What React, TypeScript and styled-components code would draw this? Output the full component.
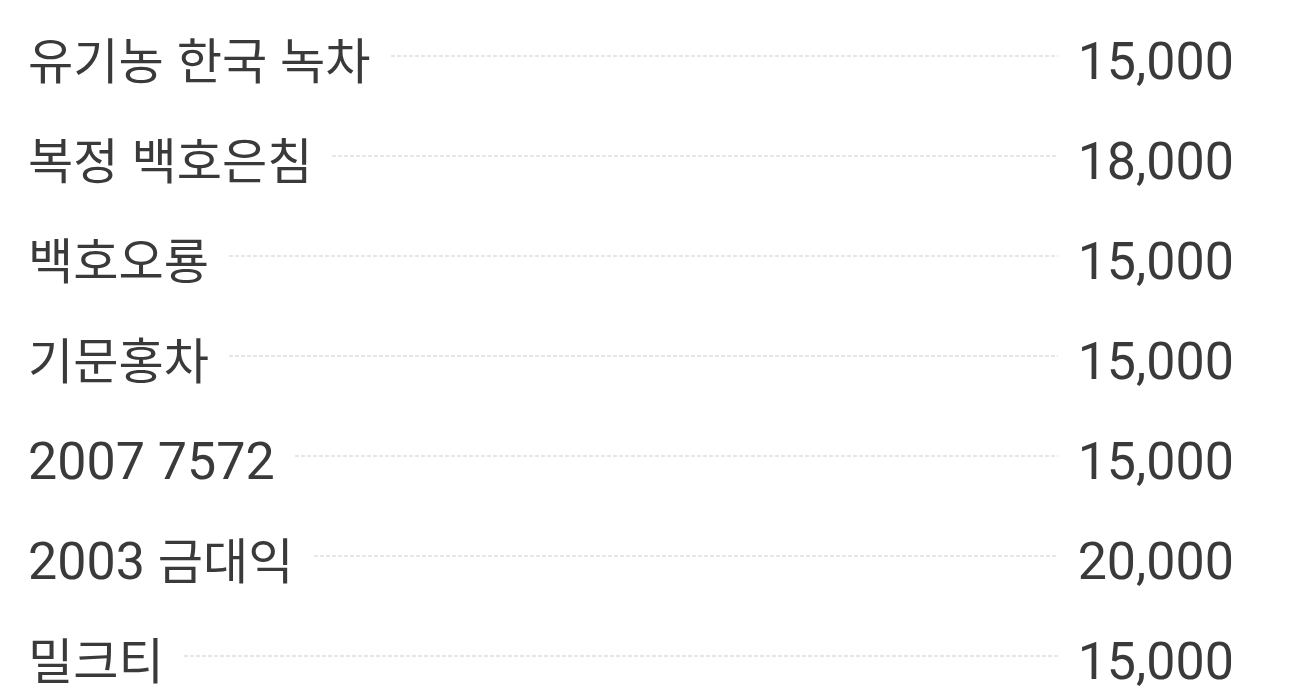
import React from "react";
import styled, { createGlobalStyle } from "styled-components";

const Global = createGlobalStyle`
  html, body { margin: 0; padding: 0; background: #fff; overflow: hidden; }
`;

const List = styled.ul`
  list-style: none;
  margin: 0;
  padding: 12px 58px 0 28px;
  font-family: Roboto, "Noto Sans CJK KR", sans-serif;
  color: #3a3a3a;
`;

const Row = styled.li`
  display: flex;
  align-items: center;
  height: 100px;
  font-size: 52px;
  line-height: 1;
`;

const Name = styled.span`
  white-space: nowrap;
`;

const Hangul = styled.span`
  font-size: 0.946em;
`;

const Leader = styled.span`
  flex: 1;
  height: 2px;
  margin: 0 20px;
  transform: translateY(-6px);
  background-image: linear-gradient(to right, #e6e6e6 0 4px, transparent 4px 6px);
  background-size: 6px 2px;
  background-repeat: repeat-x;
`;

const Price = styled.span`
  white-space: nowrap;
`;

const items = [
  ["유기농 한국 녹차", "15,000"],
  ["복정 백호은침", "18,000"],
  ["백호오룡", "15,000"],
  ["기문홍차", "15,000"],
  ["2007 7572", "15,000"],
  ["2003 금대익", "20,000"],
  ["밀크티", "15,000"],
];

function renderName(text: string) {
  const parts = text.split(/([\uAC00-\uD7A3]+)/).filter(Boolean);
  return parts.map((part, i) =>
    /[\uAC00-\uD7A3]/.test(part) ? <Hangul key={i}>{part}</Hangul> : <React.Fragment key={i}>{part}</React.Fragment>
  );
}

export default function App() {
  return (
    <>
      <Global />
      <List>
        {items.map(([n, p]) => (
          <Row key={n}>
            <Name>{renderName(n)}</Name>
            <Leader />
            <Price>{p}</Price>
          </Row>
        ))}
      </List>
    </>
  );
}
